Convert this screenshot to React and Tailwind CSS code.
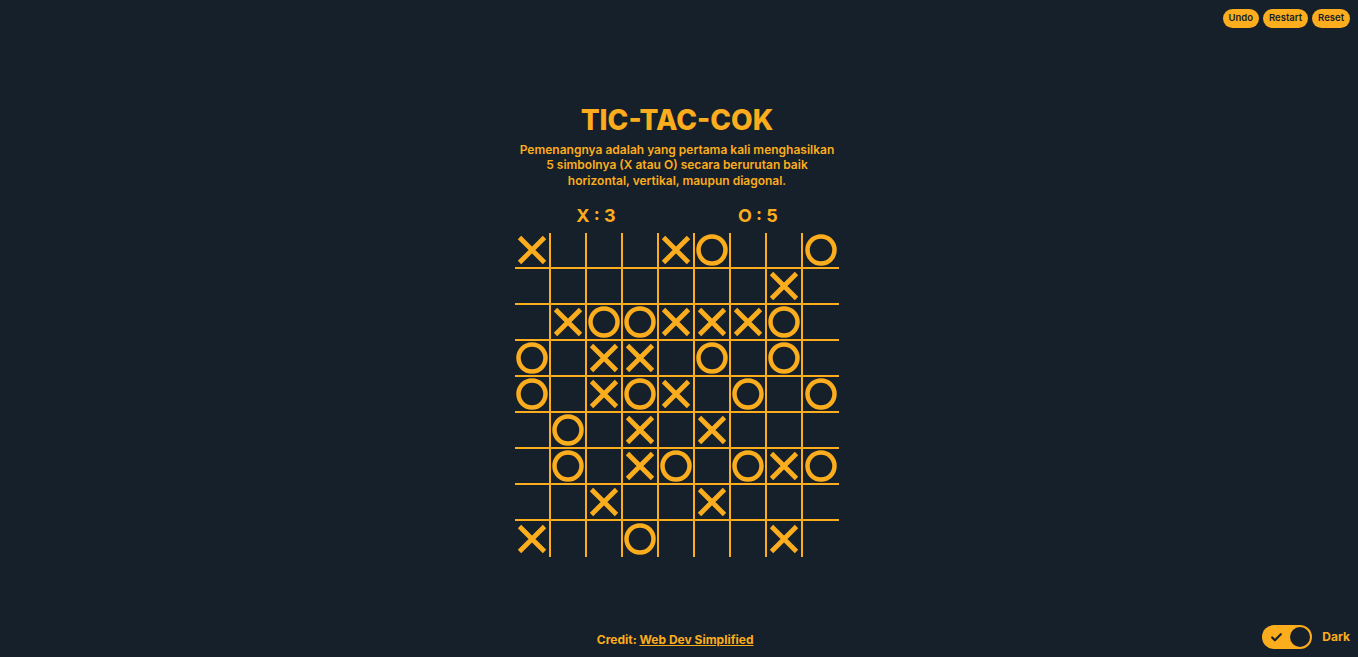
import { Check } from 'lucide-react';

const board = [
  'X...XO..O',
  '.......X.',
  '.XOOXXXO.',
  'O.XX.O.O.',
  'O.XOX.O.O',
  '.O.X.X...',
  '.O.XO.OXO',
  '..X..X...',
  'X..O...X.',
];

function Mark({ v }) {
  if (v === 'X') {
    return (
      <svg width="36" height="36" viewBox="0 0 36 36">
        <path d="M5.5 5.5 L30.5 30.5 M30.5 5.5 L5.5 30.5" stroke="#fbad1d" strokeWidth="4.8" />
      </svg>
    );
  }
  if (v === 'O') {
    return (
      <svg width="36" height="36" viewBox="0 0 36 36">
        <circle cx="18" cy="18" r="13.5" fill="none" stroke="#fbad1d" strokeWidth="4.5" />
      </svg>
    );
  }
  return null;
}

export default function App() {
  return (
    <div className="h-screen bg-[#16202a] text-[#fbad1d] flex flex-col font-bold" style={{ fontFamily: 'Inter, "Noto Sans", sans-serif' }}>
      <div className="flex justify-end gap-1 pt-[9px] pr-2">
        <button className="bg-[#fbad1d] text-[#16202a] text-[9.5px] font-semibold rounded-full h-[19px] px-1.5">Undo</button>
        <button className="bg-[#fbad1d] text-[#16202a] text-[9.5px] font-semibold rounded-full h-[19px] px-1.5">Restart</button>
        <button className="bg-[#fbad1d] text-[#16202a] text-[9.5px] font-semibold rounded-full h-[19px] px-1.5">Reset</button>
      </div>

      <div className="flex-1 flex flex-col items-center justify-center pt-[18px] pr-1">
        <h1 className="text-[28px] leading-9 font-extrabold">TIC-TAC-COK</h1>
        <p className="text-[12px] leading-[15.5px] font-semibold text-center whitespace-nowrap mt-1">
          Pemenangnya adalah yang pertama kali menghasilkan
          <br />
          5 simbolnya (X atau O) secara berurutan baik
          <br />
          horizontal, vertikal, maupun diagonal.
        </p>
        <div className="flex justify-around w-[324px] mt-4 text-[18px] leading-6">
          <span>X : 3</span>
          <span>O : 5</span>
        </div>
        <div className="grid grid-cols-9 mt-[5px]">
          {board.map((row, r) =>
            row.split('').map((c, i) => (
              <div
                key={r + '-' + i}
                className={
                  'w-9 h-9 flex items-center justify-center border-[#fbad1d] ' +
                  (i < 8 ? 'border-r-2 ' : '') +
                  (r < 8 ? 'border-b-2' : '')
                }
              >
                <div className="w-9 h-9 shrink-0 flex items-center justify-center">
                  <Mark v={c} />
                </div>
              </div>
            ))
          )}
        </div>
      </div>

      <div className="flex items-center justify-between h-[44px] px-2 pt-1">
        <div className="w-[80px]" />
        <p className="text-[12px] pt-1.5">
          Credit: <a href="#" className="underline">Web Dev Simplified</a>
        </p>
        <div className="flex items-center gap-2.5">
          <div className="w-[50px] h-6 rounded-full bg-[#fbad1d] flex items-center justify-between pl-2 pr-[2px]">
            <Check size={13} strokeWidth={4} className="text-[#16202a]" />
            <div className="w-5 h-5 rounded-full bg-[#16202a]" />
          </div>
          <span className="text-[12px]">Dark</span>
        </div>
      </div>
    </div>
  );
}
